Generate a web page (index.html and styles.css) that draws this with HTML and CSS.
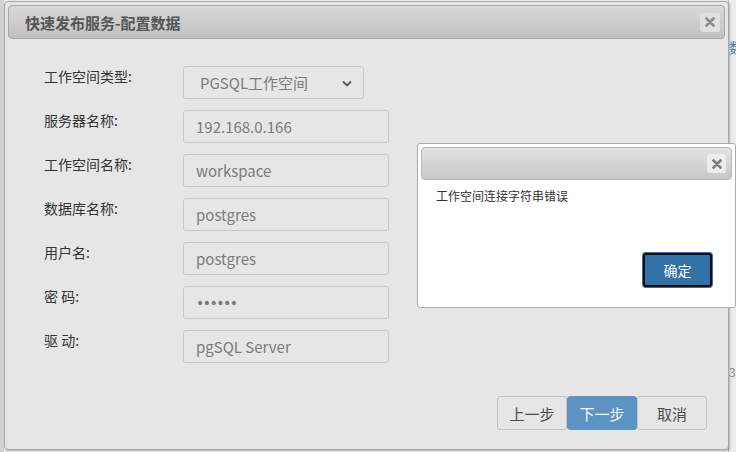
FILE: index.html
```html
<!DOCTYPE html>
<html lang="zh-CN">
<head>
    <meta charset="UTF-8">
    <title>快速发布服务-配置数据</title>
    <link rel="stylesheet" href="styles.css">
</head>
<body>
    <div class="page">
        <div class="side"></div>
        <div class="page-main"></div>
        <div class="side-right">
            <span class="frag frag-top">数</span>
            <span class="frag frag-num">3</span>
        </div>
    </div>

    <!-- main window -->
    <div class="dialog main-dialog">
        <div class="titlebar">
            <span class="title">快速发布服务-配置数据</span>
            <span class="close"><svg width="10" height="10" viewBox="0 0 10 10"><path d="M1.5 1.5 L8.5 8.5 M8.5 1.5 L1.5 8.5" stroke="#8a8a8a" stroke-width="2.6" stroke-linecap="round"/></svg></span>
        </div>
        <form class="form">
            <label>工作空间类型:</label>
            <div class="select-wrap">
                <select class="field select">
                    <option>PGSQL工作空间</option>
                </select>
                <svg class="arrow" width="10" height="7" viewBox="0 0 10 7"><path d="M1 1.5 L5 5.5 L9 1.5" fill="none" stroke="#555" stroke-width="1.8"/></svg>
            </div>
            <label>服务器名称:</label>
            <input class="field" value="192.168.0.166">
            <label>工作空间名称:</label>
            <input class="field" value="workspace">
            <label>数据库名称:</label>
            <input class="field" value="postgres">
            <label>用户名:</label>
            <input class="field" value="postgres">
            <label>密 码:</label>
            <input class="field pwd" type="password" value="123456">
            <label>驱 动:</label>
            <input class="field" value="pgSQL Server">
        </form>
        <div class="actions">
            <button class="btn">上一步</button>
            <button class="btn primary">下一步</button>
            <button class="btn">取消</button>
        </div>
    </div>

    <!-- alert window -->
    <div class="dialog alert">
        <div class="titlebar small">
            <span class="title"></span>
            <span class="close"><svg width="10" height="10" viewBox="0 0 10 10"><path d="M1.5 1.5 L8.5 8.5 M8.5 1.5 L1.5 8.5" stroke="#7a7a7a" stroke-width="2.6" stroke-linecap="round"/></svg></span>
        </div>
        <p class="msg">工作空间连接字符串错误</p>
        <div class="alert-actions">
            <button class="btn ok">确定</button>
        </div>
    </div>
</body>
</html>
```

FILE: styles.css
```css
*{
    margin: 0;
    padding: 0;
    box-sizing: border-box;
}
body{
    width: 736px;
    height: 452px;
    overflow: hidden;
    background: #ececec;
    font-family: "Noto Sans CJK SC", "Noto Sans", sans-serif;
    color: #333;
}
.page{
    display: flex;
    height: 452px;
}
.side{
    width: 4px;
    background: #d3d3d3;
}
.page-main{
    flex: 1;
}
.side-right{
    width: 8px;
    position: relative;
    border-left: 1px solid #b9b9b9;
    background: #ebebeb;
    overflow: hidden;
}
.frag{
    position: absolute;
    left: 0;
    font-size: 14px;
    line-height: 16px;
}
.frag-top{
    top: 39px;
    color: #4a7fb0;
}
.frag-num{
    top: 364px;
    color: #888;
    font-size: 12px;
}

.dialog{
    position: absolute;
    border: 1px solid #a9a9a9;
    border-radius: 4px;
    padding: 3px;
    display: flex;
    flex-direction: column;
}
.main-dialog{
    left: 4px;
    top: 1px;
    width: 725px;
    height: 449px;
    background: #e6e6e6;
    box-shadow: 1px 1px 2px rgba(0,0,0,0.25);
}
.titlebar{
    height: 34px;
    display: flex;
    align-items: center;
    justify-content: space-between;
    padding: 0 4px 0 16px;
    border: 1px solid #a8a8a8;
    border-radius: 4px;
    background: linear-gradient(#d9d9d9, #c1c1c1);
}
.titlebar.small{
    height: 33px;
    padding-right: 5px;
    border-color: #b4b4b4;
    background: linear-gradient(#e2e2e2, #c8c8c8);
}
.title{
    font-size: 15px;
    font-weight: bold;
    color: #555;
}
.close{
    width: 20px;
    height: 19px;
    display: flex;
    align-items: center;
    justify-content: center;
    border-radius: 3px;
    background: #e0e0e0;
}
.small .close{
    background: #ededed;
    width: 19px;
}

.form{
    display: grid;
    grid-template-columns: 139px 206px;
    row-gap: 11px;
    padding: 27px 0 0 36px;
}
.form label{
    font-size: 14px;
    line-height: 20px;
    color: #333;
}
.field{
    height: 33px;
    width: 206px;
    border: 1px solid #c9c9c9;
    border-radius: 3px;
    background: #e6e6e6;
    padding: 0 12px;
    font-family: "Noto Sans CJK SC", "Noto Sans", sans-serif;
    font-size: 15px;
    color: #7b7b7b;
    outline: none;
}
.pwd{
    font-family: "DejaVu Sans", sans-serif;
    font-size: 14px;
    letter-spacing: -1.5px;
}
.select-wrap{
    position: relative;
    width: 181px;
}
.select{
    width: 181px;
    appearance: none;
    -webkit-appearance: none;
    padding-left: 16px;
}
.arrow{
    position: absolute;
    right: 12px;
    top: 14px;
}

.actions{
    margin-top: auto;
    display: flex;
    justify-content: flex-end;
    padding: 0 18px 16px 0;
}
.btn{
    width: 70px;
    height: 34px;
    border: 1px solid #c4c4c4;
    border-radius: 3px;
    background: #e6e6e6;
    font-family: "Noto Sans CJK SC", sans-serif;
    font-size: 15px;
    color: #4a4a4a;
}
.btn.primary{
    background: #5d93c3;
    border-color: #5d93c3;
    color: #f4f7fa;
}

.alert{
    left: 417px;
    top: 143px;
    width: 319px;
    height: 165px;
    background: #fff;
    border-color: #ababab;
    border-radius: 3px;
}
.msg{
    font-size: 12px;
    line-height: 16px;
    padding: 8px 0 0 15px;
    color: #333;
}
.alert-actions{
    margin-top: auto;
    display: flex;
    justify-content: flex-end;
    padding: 0 20px 17px 0;
}
.btn.ok{
    width: 69px;
    height: 34px;
    background: #3371a9;
    color: #fff;
    font-size: 14px;
    border: 2px solid #111;
    border-radius: 3px;
    box-shadow: 0 0 0 1px #3a6fa3;
}
```
